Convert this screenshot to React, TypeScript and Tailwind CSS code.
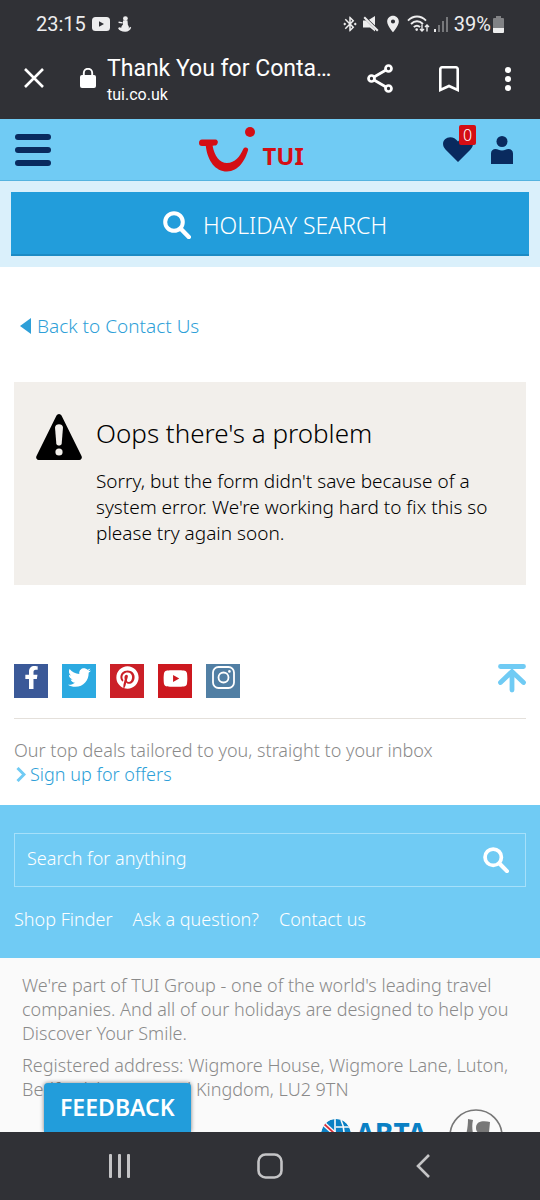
import type { ReactNode } from "react";
import { FaFacebookF, FaPinterest, FaTwitter, FaYoutube } from "react-icons/fa";
import { MdBluetoothConnected, MdLocationOn } from "react-icons/md";

type SocialLink = {
  name: string;
  className: string;
  icon: ReactNode;
};

const SOCIAL_LINKS: SocialLink[] = [
  { name: "Facebook", className: "bg-[#3b5998]", icon: <FaFacebookF size={23} /> },
  { name: "Twitter", className: "bg-[#2caae1]", icon: <FaTwitter size={23} /> },
  { name: "Pinterest", className: "bg-[#cb2027]", icon: <FaPinterest size={23} /> },
  { name: "YouTube", className: "bg-[#cd181f]", icon: <FaYoutube size={25} /> },
  { name: "Instagram", className: "bg-[#517fa4]", icon: <InstagramIcon /> },
];

const FOOTER_LINKS = ["Shop Finder", "Ask a question?", "Contact us"];

function InstagramIcon() {
  return (
    <svg width="23" height="23" viewBox="0 0 23 23" fill="none" stroke="currentColor" strokeWidth="1.8">
      <rect x="1" y="1" width="21" height="21" rx="5.5" />
      <circle cx="11.5" cy="11.5" r="5" />
      <circle cx="17.4" cy="5.4" r="1.3" fill="currentColor" stroke="none" />
    </svg>
  );
}

function SearchIcon({ size }: { size: number }) {
  return (
    <svg width={size} height={size} viewBox="0 0 28 28" fill="none" stroke="currentColor" strokeLinecap="round">
      <circle cx="11" cy="11" r="8.8" strokeWidth="4" />
      <path d="M18 18l7.800 8" strokeWidth="4.400" />
    </svg>
  );
}

function StatusBar() {
  return (
    <div className="flex h-12 items-center px-9 text-[#ededee]">
      <span className="text-xl">23:15</span>
      <svg className="ml-1.5" width="18" height="14" viewBox="0 0 18 14">
        <rect width="18" height="14" rx="3.5" fill="currentColor" />
        <path d="M7 4.2v5.6L12 7z" fill="#303136" />
      </svg>
      <svg className="ml-2" width="14" height="16" viewBox="0 0 14 16" fill="currentColor">
        <circle cx="7.4" cy="2.6" r="2.4" />
        <path d="M5 4.5h4.500l.4 4.400c1.200 1.300 1.400 3 .5 4.300l1.600-2.400 1.200.7c-.6 2.500-3 4.200-6 4.200-3.500 0-6.300-1.300-7.100-3.500l1-1 2.200.6c0-1.500.8-2.200 1.600-3z" />
        <path d="M.6 6.3l4 .6" stroke="currentColor" strokeWidth="1.4" />
      </svg>
      <div className="ml-auto flex items-center">
        <MdBluetoothConnected size={18} stroke="currentColor" />
        <svg className="ml-1" width="16" height="16" viewBox="0 0 16 16" fill="currentColor">
          <path d="M0 4.500h3l9 9v2L7 11.500H0zM12 0v9.500L6 3.800z" />
          <path d="M1.200 1.200l13.600 13.600" stroke="currentColor" strokeWidth="2" />
        </svg>
        <MdLocationOn className="ml-1" size={20} />
        <svg className="ml-1" width="23" height="18" viewBox="0 0 23 18" fill="none" stroke="currentColor" strokeWidth="1.9">
          <path d="M1 5.600C6.400.2 13.600.2 19 5.600M4 9c3.700-3.700 8.300-3.700 12 0M6.800 12.200c2-2 4.400-2 6.200 0" />
          <circle cx="9.7" cy="14.6" r="1.3" fill="currentColor" stroke="none" />
          <path d="M15 9.500v6.500m-2-2l2 2 2-2M20 16.500V10m-2 2l2-2 2 2" strokeWidth="1.4" />
        </svg>
        <svg className="ml-1" width="14" height="15" viewBox="0 0 14 15" fill="#77787b">
          <rect y="12" width="2" height="3" fill="#ededee" />
          <rect x="4" y="8" width="2" height="7" />
          <rect x="8" y="4" width="2" height="11" />
          <rect x="12" width="2" height="15" />
        </svg>
        <span className="ml-1.5 text-xl">39%</span>
        <svg className="ml-0.5" width="11" height="17" viewBox="0 0 11 17">
          <path d="M3 0h5v2h2a1 1 0 011 1v9H0V3a1 1 0 011-1h2z" fill="#818285" />
          <path d="M0 12h11v4a1 1 0 01-1 1H1a1 1 0 01-1-1z" fill="currentColor" />
        </svg>
      </div>
    </div>
  );
}

function BrowserBar() {
  return (
    <div className="flex h-[71px] items-start pl-6 text-white">
      <button type="button" aria-label="Close tab" className="mt-5">
        <svg width="20" height="20" viewBox="0 0 20 20" fill="none" stroke="currentColor" strokeWidth="2.6">
          <path d="M1 1l18 18M19 1L1 19" />
        </svg>
      </button>
      <svg className="mt-5 ml-9" width="16" height="20" viewBox="0 0 16 20">
        <path d="M3.800 8V5a4.200 4.200 0 018.400 0v3" fill="none" stroke="currentColor" strokeWidth="1.9" />
        <rect y="7" width="16" height="13" rx="2" fill="currentColor" />
      </svg>
      <div className="ml-[11px] min-w-0 flex-1 pt-[7px]">
        <div className="truncate text-[23px] leading-7">Thank You for Conta…</div>
        <div className="text-base leading-6">tui.co.uk</div>
      </div>
      <div className="mt-4 mr-[29px] flex items-center gap-[46px]">
        <button type="button" aria-label="Share">
          <svg width="26" height="29" viewBox="0 0 26 29" fill="none" stroke="currentColor" strokeWidth="2.7">
            <circle cx="4.5" cy="14.5" r="3" />
            <circle cx="21.5" cy="4.5" r="3" />
            <circle cx="21.5" cy="24.5" r="3" />
            <path d="M7 13L19 6M7 16l12 7" />
          </svg>
        </button>
        <button type="button" aria-label="Bookmark">
          <svg width="20" height="26" viewBox="0 0 20 26" fill="none" stroke="currentColor" strokeWidth="2.6">
            <path d="M1.300 24V3a1.700 1.700 0 011.700-1.700h14A1.700 1.700 0 0118.700 3v21L10 20z" />
          </svg>
        </button>
        <button type="button" aria-label="More options">
          <svg width="6" height="24" viewBox="0 0 6 24" fill="currentColor">
            <circle cx="3" cy="3" r="3" />
            <circle cx="3" cy="12" r="3" />
            <circle cx="3" cy="21" r="3" />
          </svg>
        </button>
      </div>
    </div>
  );
}

function SiteHeader() {
  return (
    <header className="grid h-[62px] shrink-0 grid-cols-[5fr_auto_6fr] items-center border-b border-[#55b3df] bg-[#70cbf4] px-[15px] text-[#092a5e]">
      <button type="button" aria-label="Menu" className="justify-self-start">
        <svg width="36" height="32" viewBox="0 0 36 32" fill="currentColor">
          <rect width="36" height="6" rx="3" />
          <rect y="13" width="36" height="6" rx="3" />
          <rect y="26" width="36" height="6" rx="3" />
        </svg>
      </button>
      <a href="#home" aria-label="TUI home" className="flex items-end text-[#d40e14]">
        <svg width="57" height="45" viewBox="0 0 57 45" fill="currentColor">
          <circle cx="51" cy="5" r="5" />
          <path d="M3 12.500h13.500a2.500 2.500 0 012.200 3.400c-.5 1.700-1.500 2.500-3.400 2.700l-1.700.2C15.500 29 20.500 36 28 36c8 0 13-6.500 16.400-14.200 1-2.300 5.300-1.700 4.700 1C46.500 33 39.500 44.500 28 44.500 16.500 44.500 8.500 34 6.800 19H3C1 19 0 18 0 16c0-2.300 1-3.500 3-3.500z" />
        </svg>
        <span className="ml-1.5 text-2xl leading-8 font-bold">TUI</span>
      </a>
      <div className="flex items-center gap-[18px] justify-self-end pr-3">
        <a href="#shortlist" aria-label="Shortlist, 0 items" className="relative">
          <svg width="30" height="25" viewBox="0 0 30 25" fill="currentColor">
            <path d="M15 25L2.500 12.500C-.8 9.200-.6 4.600 2 2.200 5.500-1 11.500-.5 15 4.500 18.500-.5 24.500-1 28 2.200c2.600 2.400 2.800 7-.5 10.300z" />
          </svg>
          <span className="absolute -top-3 left-4 flex h-5 w-[17px] items-center justify-center rounded-xs bg-[#d40e14] text-base leading-5 text-white">
            0
          </span>
        </a>
        <a href="#account" aria-label="Account">
          <svg width="22" height="28" viewBox="0 0 22 28" fill="currentColor">
            <circle cx="11" cy="5.5" r="5.5" />
            <path d="M0 28V17.500C0 14.500 2 13 4.500 13c2.500 0 3.500 1.500 6.500 1.500s4-1.500 6.500-1.500c2.500 0 4.500 1.500 4.500 4.500V28z" />
          </svg>
        </a>
      </div>
    </header>
  );
}

function ProblemCard() {
  return (
    <section className="mx-3.5 mt-[42px] flex gap-3.5 bg-[#f2efeb] px-[22px] pt-8 pb-[39px] text-black">
      <svg className="shrink-0" width="46" height="46" viewBox="0 0 46 46">
        <path d="M20.500 1.600a2.800 2.800 0 015 0L45.500 42a2.700 2.700 0 01-2.500 4H3a2.700 2.700 0 01-2.500-4z" fill="currentColor" />
        <path d="M19 13.500c0-4.500 8-4.500 8 0l-1.300 16c-.3 2.700-5.100 2.700-5.400 0z" fill="#f2efeb" />
        <circle cx="23" cy="38" r="3.6" fill="#f2efeb" />
      </svg>
      <div>
        <h1 className="text-[26px] leading-[38px]">Oops there's a problem</h1>
        <p className="mt-4 text-[19px] leading-[26px]">
          Sorry, but the form didn't save because of a system error. We're working hard to fix this so please try
          again soon.
        </p>
      </div>
    </section>
  );
}

function SocialRow() {
  return (
    <div className="mx-3.5 mt-[79px] flex shrink-0 items-start border-b border-[#e4e0db] pb-5">
      <div className="flex gap-3.5">
        {SOCIAL_LINKS.map((link) => (
          <a
            key={link.name}
            href={`#${link.name.toLowerCase()}`}
            aria-label={link.name}
            className={`flex h-[34px] w-[34px] justify-center pt-0.5 text-white ${link.className}`}
          >
            {link.icon}
          </a>
        ))}
      </div>
      <button type="button" aria-label="Back to top" className="ml-auto text-[#70cbf4]">
        <svg width="28" height="29" viewBox="0 0 28 29" fill="none" stroke="currentColor" strokeWidth="4.8" strokeLinecap="round">
          <path d="M2.500 2.500h23M14 9v17M2.500 18.500L14 7.500l11.500 11" />
        </svg>
      </button>
    </div>
  );
}

function SiteFooter() {
  return (
    <footer className="flex-1 bg-[#fafafa] px-[22px] pt-[15px] text-[#8a8a8a]">
      <p className="text-lg leading-6">
        We're part of TUI Group - one of the world's leading travel companies. And all of our holidays are designed to
        help you Discover Your Smile.
      </p>
      <p className="mt-2 text-lg leading-6">
        Registered address: Wigmore House, Wigmore Lane, Luton, Bedfordshire, United Kingdom, LU2 9TN
      </p>
      <div className="mt-2 flex items-start justify-end gap-[22px] pr-[15px]">
        <div className="mt-2.5 flex items-start text-[#0a80c4]">
          <svg className="rounded-full" width="30" height="30" viewBox="0 0 30 30">
            <circle cx="15" cy="15" r="15" fill="currentColor" />
            <path d="M14 0v30M15 8h15M15 15h15M20 1c4 8 4 20 0 28" stroke="#fafafa" strokeWidth="1.6" fill="none" />
            <path d="M2 4l12 11" stroke="#fafafa" strokeWidth="4.5" />
            <path d="M2 4l12 11" stroke="#d8303a" strokeWidth="1.8" />
          </svg>
          <span className="ml-1 text-[28px] leading-7 font-bold">ABTA</span>
        </div>
        <svg width="54" height="54" viewBox="0 0 54 54">
          <circle cx="27" cy="27" r="26" fill="none" stroke="#777" strokeWidth="1.6" />
          <path d="M19 10l5 1c-1.500 6-.5 12 1 18h-9c2-6 3-12 3-19zM41 13c-5-1-14-2-14 6 0 5 5 7 8 5v10h4z" fill="#777" />
        </svg>
      </div>
    </footer>
  );
}

function NavigationBar() {
  return (
    <nav className="grid h-[68px] shrink-0 grid-cols-[1fr_auto_1fr] items-center bg-[#303136] text-[#c4c4c6]">
      <button type="button" aria-label="Recent apps" className="ml-[108px] justify-self-start">
        <svg width="24" height="24" viewBox="0 0 24 24" fill="currentColor">
          <rect x="1" width="3" height="24" rx="1" />
          <rect x="10" width="3" height="24" rx="1" />
          <rect x="19" width="3" height="24" rx="1" />
        </svg>
      </button>
      <button type="button" aria-label="Home">
        <svg width="26" height="26" viewBox="0 0 26 26" fill="none" stroke="currentColor" strokeWidth="2.6">
          <rect x="1.5" y="1.5" width="23" height="23" rx="7" />
        </svg>
      </button>
      <button type="button" aria-label="Back" className="mr-[110px] justify-self-end">
        <svg width="14" height="24" viewBox="0 0 14 24" fill="none" stroke="currentColor" strokeWidth="2.6">
          <path d="M13 1L2 12l11 11" />
        </svg>
      </button>
    </nav>
  );
}

export default function App() {
  return (
    <div className="flex h-screen flex-col overflow-hidden bg-white font-['Noto_Sans','Open_Sans',sans-serif] font-light">
      <div className="shrink-0 bg-[#303136] font-[Roboto,sans-serif] font-normal">
        <StatusBar />
        <BrowserBar />
      </div>

      <div className="relative flex min-h-0 flex-1 flex-col overflow-hidden">
        <SiteHeader />
        <div className="shrink-0 bg-[#daf0fb] p-[11px]">
          <button
            type="button"
            className="flex h-16 w-full items-center justify-center gap-3 border-b-2 border-[#1c8bc4] bg-[#229ddb] pt-1 pl-2.5 text-[23px] text-white"
          >
            <SearchIcon size={28} />
            HOLIDAY SEARCH
          </button>
        </div>

        <main className="shrink-0">
          <a href="#contact" className="mt-[45px] ml-5 flex w-fit items-center gap-1.5 text-[19px] leading-7 text-[#2e9fd8]">
            <svg width="11" height="16" viewBox="0 0 11 16" fill="currentColor">
              <path d="M11 0v16L0 8z" />
            </svg>
            Back to Contact Us
          </a>
          <ProblemCard />
        </main>

        <SocialRow />
        <div className="shrink-0 px-3.5 py-[19px] text-lg leading-6">
          <p className="text-[#8a8a8a]">Our top deals tailored to you, straight to your inbox</p>
          <a href="#offers" className="flex w-fit items-center gap-1 pl-0.5 text-[#2e9fd8]">
            <svg width="10" height="15" viewBox="0 0 10 15" fill="none" stroke="#70cbf4" strokeWidth="3">
              <path d="M1.500 1l6.500 6.500L1.500 14" />
            </svg>
            Sign up for offers
          </a>
        </div>

        <div className="shrink-0 bg-[#70cbf4] px-3.5 pt-7 pb-[25px] text-lg text-white">
          <form className="flex h-[54px] items-center border border-[#a5e0fa] pr-4 pl-3">
            <input
              type="search"
              aria-label="Search for anything"
              placeholder="Search for anything"
              className="min-w-0 flex-1 bg-transparent pb-1 outline-none placeholder:text-white"
            />
            <button type="submit" aria-label="Search">
              <SearchIcon size={26} />
            </button>
          </form>
          <div className="mt-[18px] flex gap-5 leading-7">
            {FOOTER_LINKS.map((label) => (
              <a key={label} href="#help">
                {label}
              </a>
            ))}
          </div>
        </div>

        <SiteFooter />

        <button
          type="button"
          className="absolute bottom-0 left-11 h-[49px] rounded-t-sm bg-[#229ddb] px-4 text-[23px] font-semibold text-white shadow-[0_0_4px_rgba(0,0,0,0.5)]"
        >
          FEEDBACK
        </button>
      </div>

      <NavigationBar />
    </div>
  );
}
